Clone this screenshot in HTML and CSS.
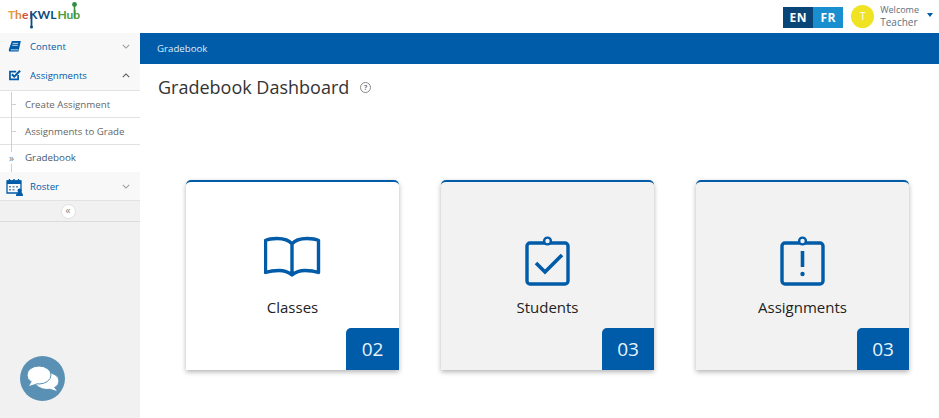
FILE: index.html
```html
<!DOCTYPE html>
<html lang="en">
<head>
    <meta charset="UTF-8">
    <meta name="viewport" content="width=device-width, initial-scale=1.0">
    <title>Gradebook Dashboard</title>
    <link rel="stylesheet" href="styles.css">
</head>
<body>
<div class="top-bar">
    <div class="logo">
        <span class="logo-the">T</span><span class="logo-h">h</span><span class="logo-e">e</span><span class="logo-kwl">KWL</span><span class="logo-hub">Hub</span>
        <svg class="logo-lines" width="85" height="33" viewBox="0 0 85 33">
            <path d="M31.500 13V27" stroke="#0d4a80" stroke-width="1.800" fill="none"/>
            <circle cx="31.500" cy="27" r="1.500" fill="#0d4a80"/>
            <path d="M74.500 5V18" stroke="#3f9440" stroke-width="1.600" fill="none"/>
            <circle cx="74.500" cy="4.500" r="2.400" fill="#2f8f46"/>
        </svg>
    </div>
    <div class="top-right">
        <div class="lang">
            <span class="lang-en">EN</span>
            <span class="lang-fr">FR</span>
        </div>
        <div class="avatar">T</div>
        <div class="welcome">
            <span>Welcome</span>
            <span class="welcome-name">Teacher</span>
        </div>
        <span class="caret"></span>
    </div>
</div>
<div class="page">
    <div class="sidebar">
        <div class="menu">
            <div class="menu-row">
                <svg class="menu-icon" width="14" height="13" viewBox="0 0 18 16"><path d="M5 1h11.500L13.500 14.500H2.500C1 14.500.8 13 1.200 11.500z" fill="#005ba8"/><path d="M3.500 12.300h9.700M6 4h7M5.500 6.500h7" stroke="#f8f8f8" stroke-width="1"/></svg>
                <span class="menu-label">Content</span>
                <svg class="chev" width="8" height="5" viewBox="0 0 10 6"><path d="M1 1l4 4 4-4" fill="none" stroke="#9a9a9a" stroke-width="1.300"/></svg>
            </div>
            <div class="menu-row menu-row-open">
                <svg class="menu-icon" width="14" height="13" viewBox="0 0 18 16"><path d="M13 7.500v5.500H2.500V3h8" fill="none" stroke="#005ba8" stroke-width="2.200"/><path d="M5 6.500l3 3 7.500-7.500" fill="none" stroke="#005ba8" stroke-width="2.600"/></svg>
                <span class="menu-label">Assignments</span>
                <svg class="chev" width="8" height="5" viewBox="0 0 10 6"><path d="M1 5l4-4 4 4" fill="none" stroke="#555" stroke-width="1.300"/></svg>
            </div>
            <div class="sub-menu">
                <div class="sub-row">Create Assignment</div>
                <div class="sub-row">Assignments to Grade</div>
                <div class="sub-row sub-row-current"><span class="sub-arrow">»</span>Gradebook</div>
            </div>
            <div class="menu-row menu-row-roster">
                <svg class="roster-icon" width="18" height="18" viewBox="0 0 18 18">
                    <path d="M1 3h14v12H1z" fill="none" stroke="#005ba8" stroke-width="1.300"/>
                    <path d="M1 2.500h14V6H1z" fill="#005ba8"/>
                    <path d="M3.500 1v3M8 1v3M12.500 1v3" stroke="#005ba8" stroke-width="1.400"/>
                    <path d="M3 8h2v1.500H3zM6.500 8h2v1.500h-2zM10 8h2v1.500h-2zM3 11h2v1.500H3zM6.500 11h2v1.500h-2z" fill="#5d8fbe"/>
                    <circle cx="13.500" cy="12.500" r="2" fill="#005ba8"/>
                    <path d="M10 18c0-3 1.500-4 3.500-4s3.500 1 3.500 4z" fill="#005ba8"/>
                </svg>
                <span class="menu-label">Roster</span>
                <svg class="chev" width="8" height="5" viewBox="0 0 10 6"><path d="M1 1l4 4 4-4" fill="none" stroke="#9a9a9a" stroke-width="1.300"/></svg>
            </div>
            <div class="collapse-row"><span class="collapse-btn">«</span></div>
            <div class="tree-line"></div>
        </div>
        <div class="chat-btn">
            <svg width="34" height="30" viewBox="0 0 34 30">
                <ellipse cx="21" cy="17" rx="12" ry="8.500" fill="#fff" stroke="#5b90b5" stroke-width="1"/>
                <path d="M27 22l4 5-8-2.500z" fill="#fff"/>
                <ellipse cx="13" cy="11" rx="12" ry="9" fill="#fff" stroke="#5b90b5" stroke-width="1"/>
                <path d="M6 17l-3 5 8-2.500z" fill="#fff"/>
            </svg>
        </div>
    </div>
    <div class="main">
        <div class="crumb-bar">Gradebook</div>
        <div class="title-row">
            <h1>Gradebook Dashboard</h1>
            <span class="help">?</span>
        </div>
        <div class="cards">
            <div class="card card-white">
                <svg class="card-icon card-icon-book" width="58" height="42" viewBox="1 0 58 42">
                    <path d="M29 8C26 4 20 2.500 14 2.500 9 2.500 5.500 3 2.500 4.500V36.500C7 35 12 34.500 16 34.500 22 34.500 26 36.500 29 39 32 36.500 36 34.500 42 34.500 46 34.500 51 35 55.500 36.500V4.500C52.500 3 49 2.500 44 2.500 38 2.500 32 4 29 8zM29 8V38" fill="none" stroke="#005ba8" stroke-width="3.400" stroke-linejoin="round"/>
                </svg>
                <div class="card-label">Classes</div>
                <div class="card-count card-count-wide">02</div>
            </div>
            <div class="card">
                <svg class="card-icon" width="46" height="50" viewBox="0 0 46 50">
                    <rect x="2" y="7" width="41" height="41" rx="3" fill="none" stroke="#005ba8" stroke-width="3.400"/>
                    <circle cx="22.500" cy="5" r="3.400" fill="#f2f2f2" stroke="#005ba8" stroke-width="2.400"/>
                    <path d="M11 27l9 9L37 19" fill="none" stroke="#005ba8" stroke-width="3.600"/>
                </svg>
                <div class="card-label">Students</div>
                <div class="card-count">03</div>
            </div>
            <div class="card">
                <svg class="card-icon" width="46" height="50" viewBox="0 0 46 50">
                    <rect x="2" y="7" width="41" height="41" rx="3" fill="none" stroke="#005ba8" stroke-width="3.400"/>
                    <circle cx="22.500" cy="5" r="3.400" fill="#f2f2f2" stroke="#005ba8" stroke-width="2.400"/>
                    <path d="M22.500 15v16" stroke="#005ba8" stroke-width="3.600"/>
                    <circle cx="22.500" cy="38" r="2.200" fill="#005ba8"/>
                </svg>
                <div class="card-label">Assignments</div>
                <div class="card-count">03</div>
            </div>
        </div>
    </div>
</div>
</body>
</html>
```

FILE: styles.css
```css
html, body {
    margin: 0;
    height: 100%;
    overflow: hidden;
}
body {
    font-family: "Open Sans", sans-serif;
    background-color: #fff;
    color: #333;
}

/* top bar */
.top-bar {
    height: 33px;
    display: flex;
    justify-content: space-between;
    background-color: #fff;
}
.logo {
    position: relative;
    width: 85px;
    padding: 6px 0 0 8px;
    box-sizing: border-box;
    font-family: "Lato", sans-serif;
    font-weight: 700;
    font-size: 12px;
    line-height: 18px;
    white-space: nowrap;
}
.logo-lines {
    position: absolute;
    left: 0;
    top: 0;
}
.logo-the { color: #e8a23a; }
.logo-h { color: #dc8a3c; }
.logo-e { color: #d2503f; }
.logo-kwl {
    margin-left: 1px;
    color: #0d4a80;
    font-size: 12px;
}
.logo-hub {
    margin-left: 1px;
    color: #4f9a3d;
}
.top-right {
    display: flex;
    align-items: center;
    padding-right: 6px;
}
.lang {
    display: flex;
    height: 21px;
    margin-top: 1px;
    color: #fff;
    font-size: 12px;
    font-weight: 700;
    line-height: 21px;
    text-align: center;
}
.lang-en {
    width: 30px;
    background-color: #0a4577;
    letter-spacing: .5px;
}
.lang-fr {
    width: 30px;
    background-color: #1a8fd0;
    letter-spacing: .5px;
}
.avatar {
    width: 23px;
    height: 23px;
    margin-top: -1px;
    margin-left: 8px;
    border-radius: 50%;
    background-color: #f0e323;
    color: #fff;
    font-size: 10px;
    line-height: 23px;
    text-align: center;
}
.welcome {
    display: flex;
    flex-direction: column;
    margin-left: 6px;
    color: #5b6f80;
    font-size: 9px;
    line-height: 12px;
}
.welcome-name {
    font-size: 10px;
    line-height: 13px;
}
.caret {
    width: 0;
    height: 0;
    margin: -4px 0 0 8px;
    border-left: 3.500px solid transparent;
    border-right: 3.500px solid transparent;
    border-top: 4px solid #005ba8;
}

/* sidebar */
.page {
    display: flex;
    height: 385px;
}
.sidebar {
    position: relative;
    width: 140px;
    flex-shrink: 0;
    background-color: #f1f1f1;
}
.menu {
    position: relative;
}
.menu-row {
    display: flex;
    align-items: center;
    height: 27px;
    padding: 0 10px 0 8px;
    background-color: #f8f8f8;
}
.menu-row-open {
    box-sizing: border-box;
    height: 31px;
    padding-top: 1px;
    border-bottom: 1px solid #e2e2e2;
}
.menu-row-roster {
    height: 29px;
    padding-top: 1px;
    border-bottom: 1px solid #e2e2e2;
    box-sizing: border-box;
}
.menu-icon {
    flex-shrink: 0;
    margin-right: 8px;
}
.roster-icon {
    flex-shrink: 0;
    margin-left: -2px;
    margin-right: 6px;
}
.menu-label {
    flex: 1;
    color: #005ba8;
    font-size: 9.600px;
}
.sub-menu {
    background-color: #fff;
}
.sub-row {
    position: relative;
    height: 25px;
    padding-top: 1px;
    padding-left: 25px;
    border-bottom: 1px solid #e2e2e2;
    color: #666;
    font-size: 9.700px;
    line-height: 26px;
}
.sub-row::before {
    content: "";
    position: absolute;
    left: 11px;
    top: 13px;
    width: 5px;
    height: 1px;
    background-color: #cfcfcf;
}
.sub-row-current {
    height: 27px;
    padding-top: 0;
    border-bottom: 0;
    color: #3f5a70;
    font-size: 9.800px;
}
.sub-row-current::before {
    display: none;
}
.sub-arrow {
    position: absolute;
    z-index: 1;
    left: 9px;
    top: 7px;
    height: 12px;
    padding: 0 1px 0 0;
    background-color: #fff;
    color: #6b7f90;
    font-size: 10px;
    line-height: 12px;
}
.tree-line {
    position: absolute;
    left: 11px;
    top: 59px;
    width: 1px;
    height: 80px;
    background-color: #cfcfcf;
}
.collapse-row {
    display: flex;
    justify-content: center;
    align-items: center;
    height: 20px;
    border-bottom: 1px solid #dcdcdc;
    background-color: #f1f1f1;
}
.collapse-btn {
    width: 13px;
    height: 13px;
    margin-left: -4px;
    border-radius: 50%;
    background-color: #fff;
    border: 1px solid #e0e0e0;
    color: #888;
    font-size: 10px;
    line-height: 11px;
    text-align: center;
}
.chat-btn {
    position: absolute;
    left: 20px;
    top: 323px;
    width: 45px;
    height: 45px;
    display: flex;
    justify-content: center;
    align-items: center;
    border-radius: 50%;
    background-color: #5b90b5;
}

/* main */
.main {
    flex: 1;
}
.crumb-bar {
    height: 31px;
    padding-left: 17px;
    background-color: #005ba8;
    color: #dfeefa;
    font-size: 9.700px;
    line-height: 31px;
}
.title-row {
    display: flex;
    align-items: center;
    height: 46px;
    padding-left: 18px;
}
h1 {
    margin: 0;
    color: #333;
    font-size: 18px;
    font-weight: 400;
}
.help {
    width: 9px;
    height: 9px;
    margin-left: 11px;
    border: 1px solid #888;
    border-radius: 50%;
    color: #777;
    font-size: 7px;
    font-weight: 700;
    line-height: 9px;
    text-align: center;
}
.cards {
    display: flex;
    gap: 42px;
    padding: 70px 0 0 46px;
}
.card {
    position: relative;
    width: 213px;
    height: 190px;
    box-sizing: border-box;
    padding-top: 54px;
    border-top: 2px solid #005ba8;
    border-radius: 5px 5px 0 0;
    background-color: #f2f2f2;
    box-shadow: 0 2px 5px rgba(0, 0, 0, .3);
    text-align: center;
}
.card-white {
    background-color: #fff;
}
.card-icon {
    display: block;
    margin: 0 auto;
}
.card-icon-book {
    margin-bottom: 19px;
}
.card-label {
    margin-top: 11px;
    color: #222;
    font-size: 15px;
    line-height: 20px;
}
.card-count {
    position: absolute;
    right: 0;
    bottom: 0;
    width: 52px;
    height: 42px;
    border-top-left-radius: 5px;
    background-color: #005ba8;
    color: #e8f4fd;
    font-size: 19px;
    line-height: 42px;
    text-align: center;
}
.card-count-wide {
    width: 53px;
}
```
